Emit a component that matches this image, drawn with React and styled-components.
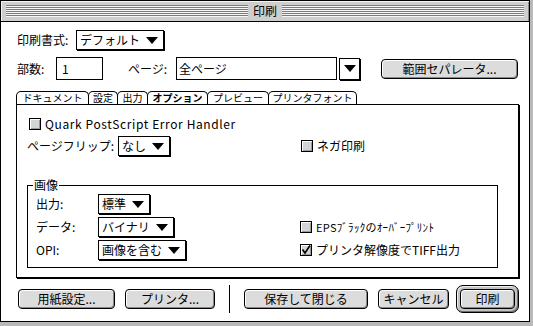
import React from 'react';
import styled, { createGlobalStyle } from 'styled-components';

const GlobalStyle = createGlobalStyle`
  html, body {
    margin: 0;
    padding: 0;
    background: #b9b9b9;
  }
  body {
    font-family: "Noto Sans CJK JP", "Noto Sans", sans-serif;
    font-size: 12px;
    color: #000;
  }
`;

const Window = styled.div`
  width: 530px;
  height: 322px;
  box-sizing: border-box;
  border: 1px solid #000;
  background: #fff;
  display: flex;
  flex-direction: column;
`;

const TitleBar = styled.div`
  height: 21px;
  flex: none;
  box-sizing: border-box;
  background: #cecece;
  border-bottom: 1px solid #000;
  box-shadow: inset 1px 1px 0 #f4f4f4, inset -1px 0 0 #8c8c8c;
  display: flex;
  align-items: center;
  padding: 0 5px;
  gap: 3px;
`;

const Stripes = styled.div`
  flex: 1;
  height: 12px;
  background: repeating-linear-gradient(to bottom, #7c7c7c 0 1px, #f6f6f6 1px 2px);
`;

const Title = styled.div`
  line-height: 14px;
  padding: 0 2px;
`;

const Body = styled.div`
  flex: 1;
  display: flex;
  flex-direction: column;
  padding: 8px 0 0 16px;
`;

const Row = styled.div`
  display: flex;
  align-items: center;
  height: ${p => p.$h}px;
  margin-top: ${p => p.$mt || 0}px;
`;

const Label = styled.span`
  flex: none;
  width: ${p => (p.$w ? `${p.$w}px` : 'auto')};
  margin-left: ${p => p.$ml || 0}px;
  white-space: nowrap;
  line-height: 14px;
`;

const Popup = styled.div`
  flex: none;
  height: 20px;
  box-sizing: border-box;
  border: 1px solid #000;
  box-shadow: 1px 1px 0 #000;
  background: #fff;
  display: flex;
  align-items: center;
  gap: 6px;
  padding: 0 5px 0 3px;
  white-space: nowrap;
  line-height: 14px;
`;

const Triangle = styled.span`
  flex: none;
  width: 0;
  height: 0;
  border-left: 6px solid transparent;
  border-right: 6px solid transparent;
  border-top: 7px solid #000;
`;

const TextField = styled.div`
  flex: none;
  width: ${p => p.$w}px;
  height: 23px;
  margin-left: ${p => p.$ml || 0}px;
  box-sizing: border-box;
  border: 1px solid #000;
  display: flex;
  align-items: center;
  padding-left: ${p => p.$pl}px;
  line-height: 14px;
`;

const ArrowBox = styled.div`
  flex: none;
  width: 21px;
  height: 22px;
  margin-left: 2px;
  box-sizing: border-box;
  border: 1px solid #000;
  box-shadow: 1px 1px 0 #000;
  display: flex;
  align-items: center;
  justify-content: center;
`;

const Button = styled.button`
  flex: none;
  width: ${p => (p.$w ? `${p.$w}px` : '100%')};
  height: 20px;
  margin-left: ${p => p.$ml || 0}px;
  box-sizing: border-box;
  border: 1px solid #000;
  border-radius: 4px;
  background: #dcdcdc;
  box-shadow: inset 1px 1px 0 #fff, inset -1px -1px 0 #8a8a8a;
  font: inherit;
  color: #000;
  padding: 0;
  display: flex;
  align-items: center;
  justify-content: center;
  white-space: nowrap;
  line-height: 14px;
`;

const DefaultRing = styled.div`
  flex: none;
  width: 63px;
  height: 28px;
  margin-left: 7px;
  box-sizing: border-box;
  border: 1px solid #000;
  border-radius: 7px;
  background: #c2c2c2;
  box-shadow: inset 1px 1px 0 #efefef, inset -1px -1px 0 #6e6e6e;
  padding: 3px;
  display: flex;
`;

const TabRow = styled.div`
  display: flex;
  height: 13px;
  margin: 11px 0 0 -1px;
`;

const Tab = styled.div`
  flex: none;
  width: ${p => p.$w}px;
  height: 13px;
  box-sizing: border-box;
  margin-right: -1px;
  border: 1px solid #000;
  border-bottom: none;
  border-radius: 5px 5px 0 0;
  background: #fff;
  font-size: 10px;
  font-weight: ${p => (p.$active ? 700 : 400)};
  line-height: 12px;
  text-align: center;
  white-space: nowrap;
`;

const Panel = styled.div`
  width: 503px;
  height: 174px;
  margin-left: -1px;
  box-sizing: border-box;
  border: 1px solid #000;
  box-shadow: 1px 1px 0 #000;
  padding: 12px 0 0 10px;
  display: flex;
  flex-direction: column;
`;

const Check = styled.label`
  display: flex;
  align-items: center;
  gap: 4px;
  height: ${p => p.$h || 20}px;
  margin-left: ${p => p.$ml || 0}px;
  white-space: nowrap;
  line-height: 14px;
  font-size: ${p => p.$fs || 12}px;
  letter-spacing: ${p => p.$ls || 0}px;
`;

const Box = styled.span`
  flex: none;
  width: 12px;
  height: 12px;
  box-sizing: border-box;
  border: 1px solid #000;
  background: #d4d4d4;
  box-shadow: inset 1px 1px 0 #fff, inset -1px -1px 0 #9a9a9a;
  display: flex;
  align-items: center;
  justify-content: center;
`;

const FlipRow = styled.div`
  display: grid;
  grid-template-columns: 274px 1fr;
  align-items: center;
  height: 20px;
  margin-top: 6px;
`;

const Inline = styled.div`
  display: flex;
  align-items: center;
`;

const Group = styled.fieldset`
  width: 471px;
  min-width: 0;
  box-sizing: border-box;
  margin: 22px 0 0;
  padding: 2px 0 7px 8px;
  border: 1px solid #000;
`;

const Legend = styled.legend`
  padding: 0 1px;
  margin-left: -3px;
  line-height: 14px;
  font-size: 12px;
`;

const GroupGrid = styled.div`
  display: grid;
  grid-template-columns: 62px 202px 1fr;
  grid-auto-rows: 20px;
  row-gap: 3px;
  align-items: center;
`;

const ButtonRow = styled.div`
  display: flex;
  align-items: center;
  height: 28px;
  margin: 7px 0 0 1px;
`;

const Divider = styled.div`
  flex: none;
  width: 1px;
  height: 28px;
  margin: 0 14px;
  background: #000;
`;

function CheckBox({ checked }) {
  return (
    <Box>
      {checked && (
        <svg width="10" height="10" viewBox="0 0 10 10">
          <path d="M1.5 4.5 L4 8 L9 0.5" fill="none" stroke="#000" strokeWidth="1.6" />
        </svg>
      )}
    </Box>
  );
}

function PopupMenu({ children }) {
  return (
    <Popup>
      <span>{children}</span>
      <Triangle />
    </Popup>
  );
}

const tabs = [
  { name: 'ドキュメント', w: 73 },
  { name: '設定', w: 30 },
  { name: '出力', w: 31 },
  { name: 'オプション', w: 61, active: true },
  { name: 'プレビュー', w: 62 },
  { name: 'プリンタフォント', w: 89 },
];

export default function App() {
  return (
    <>
      <GlobalStyle />
      <Window>
        <TitleBar>
          <Stripes />
          <Title>印刷</Title>
          <Stripes />
        </TitleBar>
        <Body>
          <Row $h={20}>
            <Label $w={59}>印刷書式:</Label>
            <PopupMenu>デフォルト</PopupMenu>
          </Row>
          <Row $h={23} $mt={7}>
            <Label $w={39}>部数:</Label>
            <TextField $w={47} $pl={5}>1</TextField>
            <Label $w={48} $ml={25}>ページ:</Label>
            <TextField $w={161} $pl={2}>全ページ</TextField>
            <ArrowBox><Triangle /></ArrowBox>
            <Button $w={137} $ml={21}>範囲セパレータ...</Button>
          </Row>
          <TabRow>
            {tabs.map(t => (
              <Tab key={t.name} $w={t.w} $active={t.active}>{t.name}</Tab>
            ))}
          </TabRow>
          <Panel>
            <Check $h={13} $ml={2} $ls={0.6}>
              <CheckBox />
              Quark PostScript Error Handler
            </Check>
            <FlipRow>
              <Inline>
                <Label $w={91}>ページフリップ:</Label>
                <PopupMenu>なし</PopupMenu>
              </Inline>
              <Check>
                <CheckBox />
                ネガ印刷
              </Check>
            </FlipRow>
            <Group>
              <Legend>画像</Legend>
              <GroupGrid>
                <Label>出力:</Label>
                <Inline><PopupMenu>標準</PopupMenu></Inline>
                <span />
                <Label>データ:</Label>
                <Inline><PopupMenu>バイナリ</PopupMenu></Inline>
                <Check $fs={11} $ls={0.3}>
                  <CheckBox />
                  EPSﾌﾞﾗｯｸのｵｰﾊﾞｰﾌﾟﾘﾝﾄ
                </Check>
                <Label>OPI:</Label>
                <Inline><PopupMenu>画像を含む</PopupMenu></Inline>
                <Check>
                  <CheckBox checked />
                  プリンタ解像度でTIFF出力
                </Check>
              </GroupGrid>
            </Group>
          </Panel>
          <ButtonRow>
            <Button $w={97}>用紙設定...</Button>
            <Button $w={90} $ml={10}>プリンタ...</Button>
            <Divider />
            <Button $w={124}>保存して閉じる</Button>
            <Button $w={71} $ml={10}>キャンセル</Button>
            <DefaultRing>
              <Button>印刷</Button>
            </DefaultRing>
          </ButtonRow>
        </Body>
      </Window>
    </>
  );
}
